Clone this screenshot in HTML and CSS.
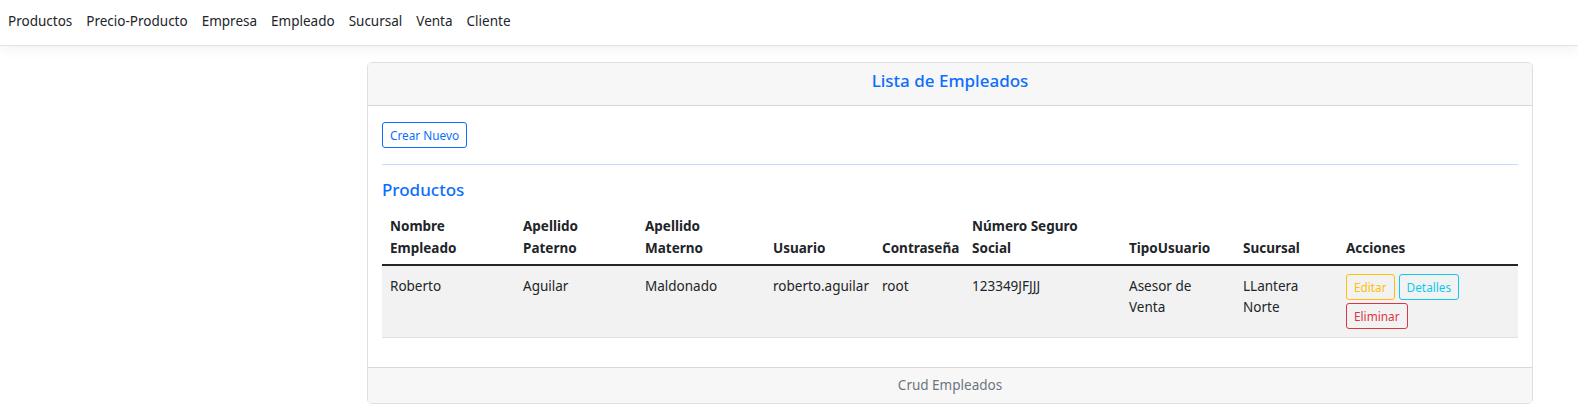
FILE: index.html
```html
<!DOCTYPE html>
<html lang="es">
<head>
<meta charset="utf-8">
<title>Lista de Empleados</title>
<link rel="stylesheet" href="styles.css">
</head>
<body>
<header class="navbar">
  <nav class="nav">
    <a class="nav-link" href="#">Productos</a>
    <a class="nav-link" href="#">Precio-Producto</a>
    <a class="nav-link" href="#">Empresa</a>
    <a class="nav-link" href="#">Empleado</a>
    <a class="nav-link" href="#">Sucursal</a>
    <a class="nav-link" href="#">Venta</a>
    <a class="nav-link" href="#">Cliente</a>
  </nav>
</header>
<main class="main">
  <section class="card">
    <div class="card-header">
      <h5 class="card-title">Lista de Empleados</h5>
    </div>
    <div class="card-body">
      <a class="btn btn-primary" href="#">Crear Nuevo</a>
      <hr class="divider">
      <h5 class="section-title">Productos</h5>
      <table class="table">
        <colgroup>
          <col class="c1"><col class="c2"><col class="c3"><col class="c4"><col class="c5"><col class="c6"><col class="c7"><col class="c8"><col class="c9">
        </colgroup>
        <thead>
          <tr>
            <th>Nombre Empleado</th>
            <th>Apellido Paterno</th>
            <th>Apellido Materno</th>
            <th>Usuario</th>
            <th>Contraseña</th>
            <th>Número Seguro Social</th>
            <th>TipoUsuario</th>
            <th>Sucursal</th>
            <th>Acciones</th>
          </tr>
        </thead>
        <tbody>
          <tr class="striped">
            <td>Roberto</td>
            <td>Aguilar</td>
            <td>Maldonado</td>
            <td>roberto.aguilar</td>
            <td>root</td>
            <td>123349JFJJJ</td>
            <td>Asesor de Venta</td>
            <td>LLantera Norte</td>
            <td class="action-cell">
              <div class="actions">
                <a class="btn btn-warning" href="#">Editar</a>
                <a class="btn btn-info" href="#">Detalles</a>
                <a class="btn btn-danger" href="#">Eliminar</a>
              </div>
            </td>
          </tr>
        </tbody>
      </table>
    </div>
    <div class="card-footer">Crud Empleados</div>
  </section>
</main>
</body>
</html>
```

FILE: styles.css
```css
* { box-sizing: border-box; }

html, body {
  margin: 0;
  padding: 0;
  background: #fff;
}

body {
  font-family: "Segoe UI", "Noto Sans", "Liberation Sans", sans-serif;
  font-size: 13.5px;
  line-height: 21px;
  color: #212529;
}

.navbar {
  height: 46px;
  border-bottom: 1px solid #dee2e6;
  box-shadow: 0 4px 12px rgba(0, 0, 0, 0.05);
  display: flex;
  align-items: center;
  padding: 0 0 0 8px;
}

.nav {
  display: flex;
  gap: 14px;
  margin-top: -2px;
}

.nav-link {
  color: #212529;
  text-decoration: none;
}

.main {
  padding-top: 16px;
  padding-left: 367px;
}

.card {
  width: 1166px;
  border: 1px solid rgba(0, 0, 0, 0.125);
  border-radius: 5px;
  overflow: hidden;
}

.card-header {
  background: #f7f7f7;
  border-bottom: 1px solid rgba(0, 0, 0, 0.125);
  padding: 7px 14px;
  text-align: center;
}

.card-title {
  margin: 0 0 7px;
  font-size: 17px;
  font-weight: 500;
  line-height: 21px;
  color: #0d6efd;
}

.card-body {
  padding: 16px 14px 14px;
}

.btn {
  display: inline-block;
  font-size: 11.8px;
  line-height: 18px;
  padding: 3px 7px;
  border: 1px solid;
  border-radius: 3px;
  text-decoration: none;
  background: transparent;
}

.btn-primary { color: #0d6efd; border-color: #0d6efd; }
.btn-warning { color: #ffc107; border-color: #ffc107; }
.btn-info { color: #0dcaf0; border-color: #0dcaf0; }
.btn-danger { color: #dc3545; border-color: #dc3545; }

.divider {
  margin: 16px 0 14px;
  border: 0;
  border-top: 1px solid #c2dbff;
}

.section-title {
  margin: 0 0 7px;
  font-size: 17px;
  font-weight: 500;
  line-height: 21px;
  color: #0d6efd;
}

.table {
  width: 100%;
  table-layout: fixed;
  border-collapse: collapse;
  margin-bottom: 15px;
}

.c1 { width: 133px; }
.c2 { width: 122px; }
.c3 { width: 128px; }
.c4 { width: 109px; }
.c5 { width: 90px; }
.c6 { width: 157px; }
.c7 { width: 114px; }
.c8 { width: 103px; }
.c9 { width: auto; }

.table th,
.table td {
  padding: 8px;
  text-align: left;
}

.table th {
  font-weight: 700;
  line-height: 22px;
  padding: 8px 8px 5px;
  vertical-align: bottom;
  border-bottom: 2px solid #212529;
}

.table td {
  vertical-align: top;
  padding-top: 10px;
  border-bottom: 1px solid #dee2e6;
}

.table td.action-cell {
  padding-top: 8px;
}

.striped td {
  background: #f2f2f2;
}

.actions {
  display: flex;
  flex-wrap: wrap;
  column-gap: 4px;
  row-gap: 3px;
}

.card-footer {
  background: #f7f7f7;
  border-top: 1px solid rgba(0, 0, 0, 0.125);
  padding: 7px 14px;
  text-align: center;
  color: #6c757d;
}
```
